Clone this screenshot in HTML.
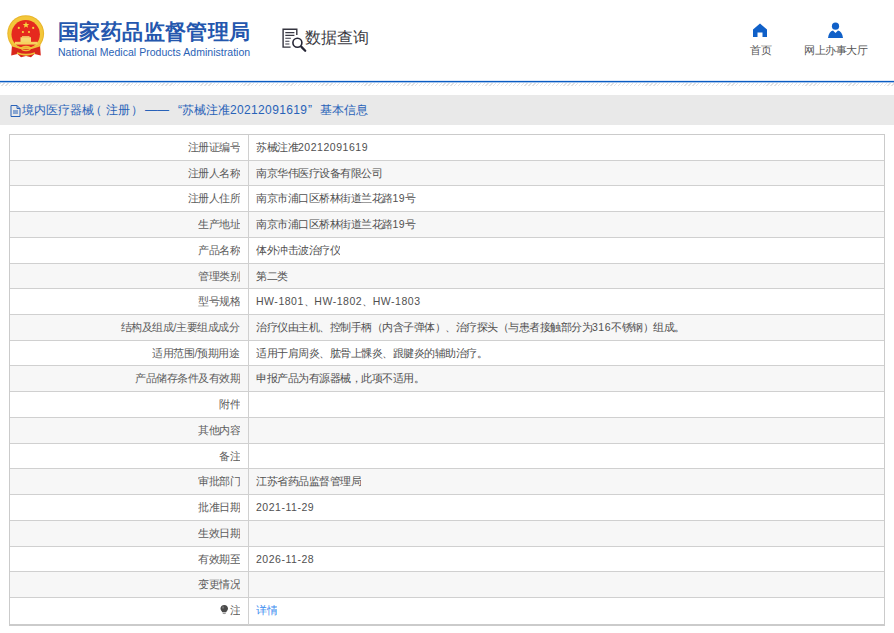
<!DOCTYPE html>
<html><head><meta charset="utf-8">
<style>
*{margin:0;padding:0;box-sizing:border-box}
html,body{width:894px;height:633px;overflow:hidden;background:#fff;font-family:"Liberation Sans",sans-serif}
.abs{position:absolute}
#title{left:58px;top:18px;font-size:21px;letter-spacing:0.4px;font-weight:bold;color:#2457ae;white-space:nowrap;line-height:28px}
#en{left:58px;top:46px;font-size:10.5px;letter-spacing:0.035px;color:#2a62b5;white-space:nowrap;line-height:12px}
#sq{left:305px;top:27px;font-size:16px;color:#3a3a42;white-space:nowrap;line-height:22px}
.navt{font-size:11px;letter-spacing:-0.4px;color:#555;white-space:nowrap;line-height:14px}
#bline{left:0;top:80px;width:894px;height:3px;background:linear-gradient(#dde8f7 0 1px,#0a5cc2 1px 2px,#a9c6ec 2px 3px)}
#hatch{left:0;top:82.5px;width:894px;height:3.5px;background:repeating-linear-gradient(135deg,#e2e2e2 0 0.9px,#fff 0.9px 2.76px)}
#bar{left:0;top:95px;width:894px;height:30px;background:#e9e9e9}
#bart{left:22px;top:0;line-height:30px;font-size:12px;color:#2862b8;white-space:nowrap;width:400px;height:30px}
.p{position:absolute;top:0}
.n{letter-spacing:0.6px}
#tbl{left:9px;top:134px;width:876px;height:492px;border:1px solid #cbcbcb;border-bottom-width:2px}
.r{position:absolute;left:0;width:874px;border-bottom:1px solid #d0d0d0;font-size:10.5px}
.r.g{background:#f7f7f7}
.r .l{position:absolute;left:0;top:0;width:239px;height:100%;border-right:1px solid #d0d0d0;text-align:right;padding-right:8.5px;color:#5c5c5c;font-size:12px}
.r .l i{font-style:normal;display:inline-block;transform:scale(0.875);transform-origin:100% 50%}
.r .v i{font-style:normal;display:inline-block;transform:scale(0.875);transform-origin:0 50%}
.r .v{position:absolute;left:240px;top:0;height:100%;padding-left:5.5px;color:#505050;white-space:nowrap;font-size:12px}
</style></head><body>
<!-- emblem -->
<svg class="abs" style="left:0;top:0" width="52" height="62" viewBox="0 0 52 62">
  <circle cx="25.7" cy="33.6" r="18.4" fill="#e9b52a"/>
  <circle cx="25.7" cy="33.6" r="17.4" fill="#f3c73a"/>
  <circle cx="25.7" cy="34.2" r="14.2" fill="#e5291e"/>
  <path d="M20.5 37.2 h10.5 v4.8 h-10.5z" fill="#f6d870"/>
  <path d="M22 36.2 h7.5 v1.2 h-7.5z" fill="#f6d870"/>
  <path d="M15 41.8 h22.5 v2.8 h-22.5z" fill="#f6d260"/>
  <path d="M12 45 L11.2 55.5 L17.5 54 L21 57.2 L26 56 L31 57.2 L34.5 54 L40.8 55.5 L40 45 Q26 50 12 45Z" fill="#d9261c"/>
  <path d="M11.5 44.2 Q26 50.5 40.5 44.2 L40.5 46.2 Q26 52.3 11.5 46.2Z" fill="#f0c03a"/>
  <ellipse cx="26" cy="48.6" rx="4.2" ry="2.1" fill="none" stroke="#f0c03a" stroke-width="1.3"/>
  <path d="M17 53 Q26 56.5 35 53" stroke="#f0c03a" stroke-width="1.8" fill="none"/>
  <polygon points="26,21.6 26.9,24 29.3,24 27.4,25.5 28.1,27.8 26,26.4 23.9,27.8 24.6,25.5 22.7,24 25.1,24" fill="#f6d43e"/>
  <circle cx="18.8" cy="27.9" r="1.1" fill="#f6d43e"/><circle cx="33.2" cy="27.9" r="1.1" fill="#f6d43e"/>
  <circle cx="22.9" cy="32" r="1.1" fill="#f6d43e"/><circle cx="29" cy="32" r="1.1" fill="#f6d43e"/>
</svg>
<div id="title" class="abs">国家药品监督管理局</div>
<div id="en" class="abs">National Medical Products Administration</div>
<!-- data query icon -->
<svg class="abs" style="left:281px;top:27px" width="26" height="26" viewBox="0 0 26 26">
  <path d="M9.6 20.1 H2.1 V2.2 H15.8 V7.9" stroke="#34343f" stroke-width="1.4" fill="none"/>
  <path d="M4.3 5.6 h9.1 M4.3 8.4 h9.1 M4.3 11.2 h5.6 M4.3 14.2 h4.1 M4.3 17 h4.1" stroke="#3a3a46" stroke-width="1.1"/>
  <circle cx="16.4" cy="15.7" r="4.5" stroke="#262636" stroke-width="1.6" fill="#fff"/>
  <path d="M20.4 19.9 L24.2 23.7" stroke="#262636" stroke-width="2.3" stroke-linecap="round"/>
</svg>
<div id="sq" class="abs">数据查询</div>
<!-- nav -->
<svg class="abs" style="left:753px;top:23px" width="14" height="14" viewBox="0 0 14 14">
  <path d="M7 0.5 L14 6.5 V14 H9.5 V9.5 H4.5 V14 H0 V6.5 Z" fill="#1060c8"/>
</svg>
<div class="abs navt" style="left:750px;top:43px">首页</div>
<svg class="abs" style="left:828px;top:22px" width="16" height="16" viewBox="0 0 16 16">
  <circle cx="7.5" cy="4.2" r="3.6" fill="#1060c8"/>
  <path d="M0 16 Q1 9 5 8.5 L7.5 11 L10 8.5 Q14 9 15 16 Z" fill="#1060c8"/>
</svg>
<div class="abs navt" style="left:804px;top:43px">网上办事大厅</div>
<div id="bline" class="abs"></div>
<div id="hatch" class="abs"></div>
<div id="bar" class="abs">
  <svg class="abs" style="left:10px;top:10px" width="11" height="12" viewBox="0 0 11 12">
    <path d="M1 0.5 H7 L10 3.5 V11.5 H1 Z M7 0.5 V3.5 H10" stroke="#2862b8" stroke-width="1" fill="none"/>
    <path d="M3 6 h5 M3 8 h5" stroke="#2862b8" stroke-width="1"/>
  </svg>
  <div id="bart" class="abs"><span class="p" style="left:0">境内医疗器械</span><span class="p" style="left:68px">（</span><span class="p" style="left:84px">注册</span><span class="p" style="left:109px">）</span><span class="p" style="left:123px">——</span><span class="p" style="left:156px">“</span><span class="p" style="left:160px">苏械注准<span style="letter-spacing:0.35px">20212091619</span></span><span class="p" style="left:286px">”</span><span class="p" style="left:298px">基本信息</span></div>
</div>
<div id="tbl" class="abs">
<div class="r" style="top:0px;height:26px"><div class="l" style="line-height:25px"><i>注册证编号</i></div><div class="v" style="line-height:25px"><i>苏械注准<span class="n">20212091619</span></i></div></div>
<div class="r g" style="top:26px;height:25px"><div class="l" style="line-height:24px"><i>注册人名称</i></div><div class="v" style="line-height:24px"><i>南京华伟医疗设备有限公司</i></div></div>
<div class="r" style="top:51px;height:26px"><div class="l" style="line-height:25px"><i>注册人住所</i></div><div class="v" style="line-height:25px"><i>南京市浦口区桥林街道兰花路<span class="n">19</span>号</i></div></div>
<div class="r g" style="top:77px;height:26px"><div class="l" style="line-height:25px"><i>生产地址</i></div><div class="v" style="line-height:25px"><i>南京市浦口区桥林街道兰花路<span class="n">19</span>号</i></div></div>
<div class="r" style="top:103px;height:26px"><div class="l" style="line-height:25px"><i>产品名称</i></div><div class="v" style="line-height:25px"><i>体外冲击波治疗仪</i></div></div>
<div class="r g" style="top:129px;height:25px"><div class="l" style="line-height:24px"><i>管理类别</i></div><div class="v" style="line-height:24px"><i>第二类</i></div></div>
<div class="r" style="top:154px;height:26px"><div class="l" style="line-height:25px"><i>型号规格</i></div><div class="v" style="line-height:25px"><i><span class="n">HW-1801</span>、<span class="n">HW-1802</span>、<span class="n">HW-1803</span></i></div></div>
<div class="r g" style="top:180px;height:26px"><div class="l" style="line-height:25px"><i>结构及组成/主要组成成分</i></div><div class="v" style="line-height:25px"><i>治疗仪由主机、控制手柄（内含子弹体）、治疗探头（与患者接触部分为<span class="n">316</span>不锈钢）组成。</i></div></div>
<div class="r" style="top:206px;height:25px"><div class="l" style="line-height:24px"><i>适用范围/预期用途</i></div><div class="v" style="line-height:24px"><i>适用于肩周炎、肱骨上髁炎、跟腱炎的辅助治疗。</i></div></div>
<div class="r g" style="top:231px;height:26px"><div class="l" style="line-height:25px"><i>产品储存条件及有效期</i></div><div class="v" style="line-height:25px"><i>申报产品为有源器械，此项不适用。</i></div></div>
<div class="r" style="top:257px;height:26px"><div class="l" style="line-height:25px"><i>附件</i></div><div class="v" style="line-height:25px"><i></i></div></div>
<div class="r g" style="top:283px;height:26px"><div class="l" style="line-height:25px"><i>其他内容</i></div><div class="v" style="line-height:25px"><i></i></div></div>
<div class="r" style="top:309px;height:25px"><div class="l" style="line-height:24px"><i>备注</i></div><div class="v" style="line-height:24px"><i></i></div></div>
<div class="r g" style="top:334px;height:26px"><div class="l" style="line-height:25px"><i>审批部门</i></div><div class="v" style="line-height:25px"><i>江苏省药品监督管理局</i></div></div>
<div class="r" style="top:360px;height:26px"><div class="l" style="line-height:25px"><i>批准日期</i></div><div class="v" style="line-height:25px"><i><span class="n">2021-11-29</span></i></div></div>
<div class="r g" style="top:386px;height:26px"><div class="l" style="line-height:25px"><i>生效日期</i></div><div class="v" style="line-height:25px"><i></i></div></div>
<div class="r" style="top:412px;height:25px"><div class="l" style="line-height:24px"><i>有效期至</i></div><div class="v" style="line-height:24px"><i><span class="n">2026-11-28</span></i></div></div>
<div class="r g" style="top:437px;height:26px"><div class="l" style="line-height:25px"><i>变更情况</i></div><div class="v" style="line-height:25px"><i></i></div></div>
<div class="r" style="top:463px;height:27px;border-bottom:0"><div class="l" style="line-height:24px"><i><svg width="10" height="11" viewBox="0 0 10 11" style="vertical-align:-1px;margin-right:1px"><path d="M5 0.3 C7.6 0.3 9.3 2.2 9.3 4.4 C9.3 6.2 8 7.2 7.2 8.6 H2.8 C2 7.2 0.7 6.2 0.7 4.4 C0.7 2.2 2.4 0.3 5 0.3Z" fill="#4a4a4a"/><path d="M3.2 9.2 h3.6 v1.2 q-1.8 0.8 -3.6 0z" fill="#9a9a9a"/><ellipse cx="3.6" cy="3.2" rx="1.2" ry="1.5" fill="#8a8a8a" opacity="0.7"/></svg>注</i></div><div class="v" style="line-height:24px"><i><span style="color:#3d8ef0">详情</span></i></div></div>
</div>
</body></html>
